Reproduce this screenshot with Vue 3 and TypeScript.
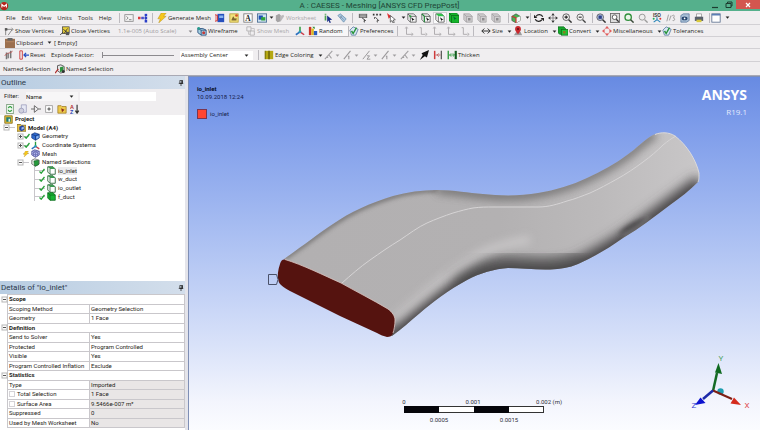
<script setup lang="ts">
import { ref } from 'vue'

interface Item {
  kind: 'sep' | 'strip' | 'btn' | 'menus' | 'scale' | 'label' | 'slider' | 'assembly'
  icons?: string[]
  icon?: string
  label?: string
  caret?: boolean
  off?: boolean
  pressed?: boolean
  active?: string
}
interface Bar { name: string; items: Item[] }
interface Node { label: string; icon: string; depth: number; expander?: 'plus' | 'minus'; mark?: 'tick' | 'bolt'; selected?: boolean }
interface Detail { name: string; value?: string; group?: boolean; ro?: boolean; check?: boolean }

const menus = ['File', 'Edit', 'View', 'Units', 'Tools', 'Help']
const sep: Item = { kind: 'sep' }

const bars: Bar[] = [
  {
    name: 'main',
    items: [
      { kind: 'menus' }, sep,
      { kind: 'strip', icons: ['cmd', 'flow'] }, sep,
      { kind: 'btn', icon: 'bolt', label: 'Generate Mesh' },
      { kind: 'strip', icons: ['section', 'comment', 'note', 'figure'], caret: true },
      { kind: 'btn', icon: 'sheet', label: 'Worksheet', off: true },
      { kind: 'strip', icons: ['info', 'tag'] }, sep,
      { kind: 'strip', icons: ['probe', 'coords'] },
      { kind: 'btn', icon: 'cursor', caret: true },
      { kind: 'strip', icons: ['cubev', 'cubee', 'cubef', 'cubeb', 'cubeg', 'cubeg', 'cubeg'], active: 'cubef' }, sep,
      { kind: 'btn', icon: 'cubex', caret: true }, sep,
      { kind: 'strip', icons: ['rotate', 'pan', 'zoomp', 'zoomm'] }, sep,
      { kind: 'strip', icons: ['zoomf', 'zoomb', 'zoomg', 'zoomo', 'iso', 'link', 'look', 'print'] }, sep,
      { kind: 'btn', icon: 'window', caret: true },
    ],
  },
  {
    name: 'display',
    items: [
      { kind: 'btn', icon: 'vertex', label: 'Show Vertices' },
      { kind: 'btn', icon: 'closev', label: 'Close Vertices' },
      { kind: 'scale' },
      { kind: 'btn', icon: 'wire', label: 'Wireframe' },
      { kind: 'btn', icon: 'meshoff', label: 'Show Mesh', off: true },
      { kind: 'btn', icon: 'axes' },
      { kind: 'btn', icon: 'random', label: 'Random', pressed: true },
      { kind: 'btn', icon: 'prefs', label: 'Preferences' }, sep,
      { kind: 'strip', icons: ['ell', 'ell2', 'ell', 'ell', 'ell2'] }, sep,
      { kind: 'btn', icon: 'size', label: 'Size', caret: true },
      { kind: 'btn', icon: 'place', label: 'Location', caret: true },
      { kind: 'btn', icon: 'convert', label: 'Convert', caret: true },
      { kind: 'btn', icon: 'misc', label: 'Miscellaneous', caret: true },
      { kind: 'btn', icon: 'prefs', label: 'Tolerances' },
    ],
  },
  {
    name: 'clip',
    items: [
      { kind: 'btn', icon: 'clipboard', label: 'Clipboard', caret: true },
      { kind: 'label', label: '[ Empty]' },
    ],
  },
  {
    name: 'explode',
    items: [
      { kind: 'btn', icon: 'explode' },
      { kind: 'btn', icon: 'reset', label: 'Reset' },
      { kind: 'slider' },
      { kind: 'assembly' }, sep,
      { kind: 'btn', icon: 'edge', label: 'Edge Coloring', caret: true },
      { kind: 'btn', icon: 'e0', caret: true, off: true },
      { kind: 'btn', icon: 'e1', caret: true, off: true },
      { kind: 'btn', icon: 'e2', caret: true, off: true },
      { kind: 'btn', icon: 'e1', caret: true, off: true },
      { kind: 'btn', icon: 'e0', caret: true, off: true },
      { kind: 'btn', icon: 'pin' },
      { kind: 'btn', icon: 'thinred' },
      { kind: 'btn', icon: 'thick', label: 'Thicken' },
    ],
  },
  {
    name: 'named',
    items: [
      { kind: 'label', label: 'Named Selection' },
      { kind: 'btn', icon: 'named', label: 'Named Selection' },
    ],
  },
]

const treeTools = ['sheetg', 'refresh', 'collapse', 'expand', 'folder', 'sort']

const nodes: Node[] = [
  { label: 'Project', icon: 'project', depth: 0 },
  { label: 'Model (A4)', icon: 'model', depth: 1, expander: 'minus' },
  { label: 'Geometry', icon: 'geom', depth: 2, expander: 'plus', mark: 'tick' },
  { label: 'Coordinate Systems', icon: 'axes', depth: 2, expander: 'plus', mark: 'tick' },
  { label: 'Mesh', icon: 'mesh', depth: 2, mark: 'bolt' },
  { label: 'Named Selections', icon: 'nsel', depth: 2, expander: 'minus' },
  { label: 'io_inlet', icon: 'facesel', depth: 3, mark: 'tick', selected: true },
  { label: 'w_duct', icon: 'facesel', depth: 3, mark: 'tick' },
  { label: 'io_outlet', icon: 'facesel', depth: 3, mark: 'tick' },
  { label: 'f_duct', icon: 'bodysel', depth: 3, mark: 'tick' },
]

const details: Detail[] = [
  { name: 'Scope', group: true },
  { name: 'Scoping Method', value: 'Geometry Selection' },
  { name: 'Geometry', value: '1 Face' },
  { name: 'Definition', group: true },
  { name: 'Send to Solver', value: 'Yes' },
  { name: 'Protected', value: 'Program Controlled' },
  { name: 'Visible', value: 'Yes' },
  { name: 'Program Controlled Inflation', value: 'Exclude' },
  { name: 'Statistics', group: true },
  { name: 'Type', value: 'Imported', ro: true },
  { name: 'Total Selection', value: '1 Face', ro: true, check: true },
  { name: 'Surface Area', value: '9.5466e-007 m²', ro: true, check: true },
  { name: 'Suppressed', value: '0', ro: true },
  { name: 'Used by Mesh Worksheet', value: 'No', ro: true },
]

const factor = ref(0)
const filterText = ref('')
</script>

<template>
  <div class="app">
    <svg class="sprite" aria-hidden="true">
      <symbol id="caret" viewBox="0 0 6 4"><path d="M0.5 0.5h5L3 3.6z" fill="currentColor" /></symbol>
      <symbol id="cmd" viewBox="0 0 12 12"><rect x="1" y="2" width="10" height="8" fill="#f4f4f4" stroke="#8a8a8a" /><path d="M3 4l2 2-2 2M6 8h3" fill="none" stroke="#555" stroke-width=".8" /></symbol>
      <symbol id="flow" viewBox="0 0 12 12"><path d="M3 6h5M9 2v8" stroke="#6574c8" fill="none" /><rect x="0" y="4.5" width="3" height="3" fill="#df3a3a" /><rect x="4" y="4.5" width="3" height="3" fill="#4d50c8" /><rect x="8" y="1" width="3" height="3" fill="#2b3fc8" /><rect x="8" y="4.7" width="3" height="3" fill="#2b3fc8" /><rect x="8" y="8.4" width="3" height="3" fill="#2b3fc8" /></symbol>
      <symbol id="bolt" viewBox="0 0 12 12"><path d="M5 0h6L8 4h3L2 12l2-5H1z" fill="#f6c71c" stroke="#a98318" stroke-width=".5" /></symbol>
      <symbol id="section" viewBox="0 0 12 12"><path d="M0 2h4v8H0z" fill="#e9a7a7" /><rect x="3" y="1" width="8" height="10" fill="#2750bd" /><path d="M5 3h5v3H5z" fill="#8ab4ef" /><path d="M0 2l3 1v6l-3 1" fill="none" stroke="#c33" /></symbol>
      <symbol id="comment" viewBox="0 0 12 12"><rect x="1" y="1" width="10" height="10" fill="#f2e27b" stroke="#b99f3a" /><path d="M3 8l2-4 2 3 2-1v3H3z" fill="#7c6530" /><circle cx="9" cy="3" r="1.6" fill="#d8532a" /></symbol>
      <symbol id="note" viewBox="0 0 12 12"><rect x="1" y="1" width="10" height="10" fill="#fff" stroke="#777" /><text x="6" y="9.5" font-size="9" font-weight="700" text-anchor="middle" font-family="Liberation Serif, serif" fill="#222">A</text></symbol>
      <symbol id="figure" viewBox="0 0 12 12"><rect x=".5" y="1" width="11" height="10" fill="#cfe3f2" stroke="#44688f" /><path d="M2 3h5v5H2z" fill="#1c4fb4" /><path d="M5 5h5v4H5z" fill="#2fa339" /></symbol>
      <symbol id="sheet" viewBox="0 0 12 12"><path d="M1 3l4-2 2 2v7l-4 1-2-2z" fill="#a5a3a5" /><path d="M6 4l4-2 1 2-4 6z" fill="#bcbabc" /></symbol>
      <symbol id="info" viewBox="0 0 12 12"><path d="M3 3v6M3 1v1" stroke="#4da252" stroke-width="2" /><path d="M5 3l6 5-3 .3 1.500 3-1.500.7-1.400-3L5 11z" fill="#1b2f87" /></symbol>
      <symbol id="tag" viewBox="0 0 12 12"><path d="M1 3l3-2 7 6-3 4z" fill="#a9c6df" stroke="#5f86a6" stroke-width=".8" /><path d="M4 4l4 4M6 3L4 6" stroke="#6f7f95" stroke-width=".7" /></symbol>
      <symbol id="probe" viewBox="0 0 12 12"><rect x="1" y="1" width="10" height="5" fill="#6d6d6d" /><path d="M2.500 2.500h7M2.500 4.500h7" stroke="#ddd" stroke-width=".8" /><path d="M5 6l4 3-1.800.3.5 2" fill="none" stroke="#222" /></symbol>
      <symbol id="coords" viewBox="0 0 12 12"><path d="M1 2h2M5 2h2M9 2h2" stroke="#333" stroke-width="2" /><path d="M4 5l4 4-2 .3.5 2M3 5v2" fill="none" stroke="#333" /></symbol>
      <symbol id="cursor" viewBox="0 0 12 12"><path d="M0 0l5 4-3 3z" fill="#d33" /><path d="M4 3l6 5-2.500.4 1.200 3-1.500.6-1.200-3L4 11z" fill="#fff" stroke="#333" stroke-width=".8" /></symbol>
      <symbol id="cubev" viewBox="0 0 12 12"><path d="M1 1h7l3 3v7H4L1 8z" fill="#f2f2f2" stroke="#4b4b4b" stroke-width=".9" /><path d="M1 1l3 3h7M4 4v7" stroke="#4b4b4b" stroke-width=".9" fill="none" /><path d="M5 5l4 3-2 .4v2z" fill="#111" /><circle cx="4" cy="4" r="1.300" fill="#27a13b" /></symbol>
      <symbol id="cubee" viewBox="0 0 12 12"><path d="M1 1h7l3 3v7H4L1 8z" fill="#f2f2f2" stroke="#4b4b4b" stroke-width=".9" /><path d="M4 4h7" stroke="#4b4b4b" /><path d="M1 1l3 3v7" stroke="#258539" stroke-width="1.500" fill="none" /><path d="M6 5l4 3-2 .4v2z" fill="#111" /></symbol>
      <symbol id="cubef" viewBox="0 0 12 12"><path d="M1 1h7l3 3v7H4L1 8z" fill="#fafafa" stroke="#4b4b4b" stroke-width=".9" /><path d="M1 1h7l3 3H4z" fill="#2fc24a" /><path d="M4 4v7" stroke="#555" /><path d="M6 5l4 3-2 .4v2z" fill="#111" /></symbol>
      <symbol id="cubeb" viewBox="0 0 12 12"><path d="M0 0h9l3 3v9H3L0 9z" fill="#14b42b" stroke="#0d6e1b" stroke-width=".8" /><path d="M0 0l3 3h9M3 3v9" stroke="#0d6e1b" fill="none" /><path d="M5 4l4 3-2 .4v2z" fill="#063" /></symbol>
      <symbol id="cubeg" viewBox="0 0 12 12"><path d="M1 1h7l3 3v7H4L1 8z" fill="#d0ced0" stroke="#a3a1a3" stroke-width=".9" /><path d="M1 1l3 3h7M4 4v7" stroke="#a3a1a3" fill="none" /><path d="M6 6h3v3H6z" fill="#8f8d8f" /></symbol>
      <symbol id="cubex" viewBox="0 0 12 12"><path d="M1 4l5-3 5 3v5l-5 3-5-3z" fill="#49b353" stroke="#444" stroke-width=".7" /><path d="M6 6l5-2v5l-5 3z" fill="#f4f4f4" /><path d="M1 4l5 2v6" fill="none" stroke="#c33" stroke-width="1.400" /></symbol>
      <symbol id="rotate" viewBox="0 0 12 12"><path d="M10.500 4.500A4.500 4 0 0 0 2.500 4M1.500 7.500A4.500 4 0 0 0 9.500 8" fill="none" stroke="#222" stroke-width="1.500" /><path d="M0 2v4h4zM12 10V6H8z" fill="#222" /></symbol>
      <symbol id="pan" viewBox="0 0 12 12"><path d="M6 0l2 3H4zM6 12l2-3H4zM0 6l3-2v4zM12 6L9 4v4z" fill="#333" /><circle cx="6" cy="6" r="1.400" fill="none" stroke="#555" stroke-width=".8" /></symbol>
      <symbol id="zoomp" viewBox="0 0 12 12"><circle cx="5" cy="5" r="4" fill="#f5f5f5" stroke="#444" /><path d="M8 8l3.500 3.500" stroke="#333" stroke-width="1.800" /><path d="M3 5h4M5 3v4" stroke="#222" stroke-width="1.400" /></symbol>
      <symbol id="zoomm" viewBox="0 0 12 12"><circle cx="5" cy="5" r="3.800" fill="#f5f5f5" stroke="#555" /><path d="M8 8l3.500 3.500" stroke="#444" stroke-width="1.600" /><path d="M3.200 5h3.600" stroke="#222" stroke-width="1.300" /></symbol>
      <symbol id="zoomf" viewBox="0 0 12 12"><circle cx="5" cy="5" r="4" fill="#b8c6e6" stroke="#555" /><path d="M3 3h4v4H3z" fill="#2b3f86" /><path d="M8 8l3.500 3.500" stroke="#333" stroke-width="1.800" /></symbol>
      <symbol id="zoomb" viewBox="0 0 12 12"><rect x=".5" y=".5" width="11" height="11" fill="#ddd" stroke="#666" /><circle cx="5.500" cy="5" r="2.800" fill="#fff" stroke="#444" /><path d="M7.500 7.500l3 3" stroke="#333" stroke-width="1.500" /></symbol>
      <symbol id="zoomg" viewBox="0 0 12 12"><circle cx="5" cy="5" r="3.800" fill="#e9f5e9" stroke="#2f8f3a" stroke-width="1.600" /><path d="M8 8l3.500 3.500" stroke="#3a4a3a" stroke-width="1.800" /></symbol>
      <symbol id="zoomo" viewBox="0 0 12 12"><circle cx="5" cy="5" r="3.600" fill="#eee" stroke="#9b9b9b" stroke-width="1.200" /><path d="M8 8l3.500 3.500" stroke="#9b9b9b" stroke-width="1.600" /></symbol>
      <symbol id="iso" viewBox="0 0 12 12"><text x="6" y="4.500" font-size="5.500" font-weight="700" text-anchor="middle" font-family="Liberation Sans, sans-serif" fill="#333">ISO</text><path d="M6 5v3l-4 3M6 8l4 3" stroke="#2a86b8" fill="none" stroke-width="1.300" /><circle cx="2" cy="7" r="1.200" fill="#2a5" /><circle cx="10" cy="7" r="1.200" fill="#d33" /></symbol>
      <symbol id="link" viewBox="0 0 12 12"><path d="M3 2L1 10M6 3L4 9M7 4c2-3 4-1 2 2M8 9c3 1 3-3 1-3" stroke="#999" fill="none" stroke-width="1.100" /></symbol>
      <symbol id="look" viewBox="0 0 12 12"><path d="M1 3l3-2h7v8l-3 2H1z" fill="#a9bfd6" stroke="#4b6b92" stroke-width=".8" /><ellipse cx="5.500" cy="6.500" rx="3.500" ry="2.200" fill="#27466e" /><circle cx="5.500" cy="6.500" r="1" fill="#fff" /></symbol>
      <symbol id="print" viewBox="0 0 12 12"><path d="M3 1h6v4H3z" fill="#fff" stroke="#777" stroke-width=".7" /><rect x="1" y="4.500" width="10" height="5" fill="#59616b" /><rect x="3" y="8" width="6" height="3" fill="#d9c93c" /></symbol>
      <symbol id="window" viewBox="0 0 12 12"><rect x="1" y="1" width="10" height="10" fill="#fff" stroke="#5c6f8f" /><path d="M1 2h10" stroke="#5c7fb5" stroke-width="2" /></symbol>
      <symbol id="vertex" viewBox="0 0 12 12"><path d="M2 11V4h8L5 11" fill="none" stroke="#777" /><rect x="1" y="2.500" width="3" height="3" fill="#555" /><path d="M9 2l2 2-2 2" fill="none" stroke="#777" stroke-width=".8" /></symbol>
      <symbol id="closev" viewBox="0 0 12 12"><rect x="3" y="1" width="8" height="8" fill="#e8cf38" stroke="#333" stroke-width=".8" /><path d="M0 11l4-4M4 4l5 4M9 3L5 9" stroke="#333" fill="none" /><rect x="7" y="7" width="4" height="4" fill="#555" /></symbol>
      <symbol id="wire" viewBox="0 0 12 12"><path d="M1 3h6l4 2v6H5L1 8z" fill="#a7d2e3" stroke="#274c7c" /><path d="M1 3l4 2h6M5 5v6" fill="none" stroke="#274c7c" /><circle cx="2" cy="3" r="1.700" fill="#2a9c8f" /><circle cx="8" cy="8" r="1.800" fill="#c33a3a" /></symbol>
      <symbol id="meshoff" viewBox="0 0 12 12"><path d="M1 1h5v5H1zM5 6h5v5H5z" fill="none" stroke="#b0aeb0" /><path d="M6 3h4v3M3 6v4h2" fill="none" stroke="#c0bec0" /></symbol>
      <symbol id="axes" viewBox="0 0 12 12"><path d="M6 7V1" stroke="#2a9a3a" stroke-width="1.800" /><path d="M6 7l5 3.500" stroke="#cc3c4c" stroke-width="1.800" /><path d="M6 7l-5 3.500" stroke="#2b6fc0" stroke-width="2" /><circle cx="6" cy="7" r="1.700" fill="#2b9cb5" /></symbol>
      <symbol id="random" viewBox="0 0 12 12"><rect x="1" y="1" width="3" height="10" fill="#c8322b" /><rect x="4" y="3" width="3" height="8" fill="#e0b91f" /><rect x="7" y="6" width="4" height="5" fill="#2a5bc0" /><path d="M5 1h3v3z" fill="#2c8a35" /></symbol>
      <symbol id="prefs" viewBox="0 0 12 12"><path d="M1 5l4-4 6 3-3 7-5 0z" fill="#d8e7f3" stroke="#5f7fa4" /><path d="M3 6l2 3 4-7" fill="none" stroke="#27943a" stroke-width="1.700" /></symbol>
      <symbol id="ell" viewBox="0 0 12 12"><path d="M3 2v8h7" fill="none" stroke="#a3a1a3" /><path d="M1.500 3L3 1l1.500 2M9 8.500l2 1.500-2 1.500" fill="none" stroke="#a3a1a3" /></symbol>
      <symbol id="ell2" viewBox="0 0 12 12"><path d="M2 2h2v8h5" fill="none" stroke="#a3a1a3" /><path d="M9 8.500l2 1.500-2 1.500" fill="none" stroke="#a3a1a3" /></symbol>
      <symbol id="size" viewBox="0 0 12 12"><path d="M1 6h10M4 3L1 6l3 3M8 3l3 3-3 3" fill="none" stroke="#333" stroke-width="1.200" /></symbol>
      <symbol id="place" viewBox="0 0 12 12"><path d="M1 11l3-4h5l2 4z" fill="#9b9b9b" /><path d="M6 10C3 6 2.500 5 2.500 3.500a3.500 3.500 0 0 1 7 0C9.500 5 9 6 6 10z" fill="#c9282d" /><circle cx="6" cy="3.500" r="1.200" fill="#5a0f12" /></symbol>
      <symbol id="convert" viewBox="0 0 12 12"><path d="M0 1h7l2 2v7H2L0 8z" fill="#17a82c" stroke="#0c6419" stroke-width=".8" /><rect x="4" y="4" width="8" height="7" fill="#1fc236" stroke="#0c6419" stroke-width=".8" /><rect x="6" y="6" width="3" height="3" fill="#8a7a20" /></symbol>
      <symbol id="misc" viewBox="0 0 12 12"><path d="M6 0l2.500 3h-5zM6 12l2.500-3h-5zM0 6l3-2.500v5zM12 6L9 3.500v5z" fill="#e05353" /><circle cx="6" cy="6" r="3.500" fill="none" stroke="#e78b8b" stroke-width=".8" /></symbol>
      <symbol id="clipboard" viewBox="0 0 12 12"><rect x="0" y="1" width="12" height="11" fill="#9b6f4e" /><rect x="3" y="0" width="6" height="3" fill="#666" /><path d="M1 4h10v1H1z" fill="#b98b66" /></symbol>
      <symbol id="explode" viewBox="0 0 12 12"><path d="M3 3v8M8 1v9" stroke="#777" stroke-width="1.800" /><path d="M1 7c2-5 8-2 9-6" stroke="#c0504d" fill="none" /><path d="M5 4v6" stroke="#333" /></symbol>
      <symbol id="reset" viewBox="0 0 12 12"><path d="M1 1h3v10H1z" fill="none" stroke="#d04a4a" stroke-width="1.200" /><path d="M12 6H6M8.500 3.500L6 6l2.500 2.500" fill="none" stroke="#274ec0" stroke-width="1.500" /></symbol>
      <symbol id="edge" viewBox="0 0 12 12"><rect x="1" y="1" width="10" height="10" fill="#b5a813" /><path d="M6 1v10" stroke="#5c5608" stroke-width="1.500" /><path d="M1.500 1v10" stroke="#6e670c" /></symbol>
      <symbol id="e0" viewBox="0 0 12 12"><path d="M1 11L10 1M6 6l3 4M3 9h2" stroke="#a3a1a3" stroke-width="1.300" fill="none" /></symbol>
      <symbol id="e1" viewBox="0 0 12 12"><path d="M1 11L9 1M7 7v4M6 8l1-1" stroke="#9b999b" stroke-width="1.300" fill="none" /></symbol>
      <symbol id="e2" viewBox="0 0 12 12"><path d="M1 11L9 1M6 7h3l-3 4h4" stroke="#9b999b" stroke-width="1.200" fill="none" /></symbol>
      <symbol id="pin" viewBox="0 0 12 12"><path d="M12 0L9.500 9 7 7.500 1 12l3.500-6L3 4z" fill="#111" /></symbol>
      <symbol id="thinred" viewBox="0 0 12 12"><path d="M2 1v10" stroke="#cf3b3b" stroke-width="1.800" /><path d="M10 1v10" stroke="#555" stroke-width="1.500" /><path d="M3 6h6M7 4L5 6l2 2" stroke="#b55" fill="none" /></symbol>
      <symbol id="thick" viewBox="0 0 12 12"><path d="M1.500 1v10" stroke="#2b9a3b" stroke-width="1.600" /><path d="M10.500 1v10" stroke="#145c20" stroke-width="2.600" /><path d="M3 6h6M5 4L3 6l2 2M7 4l2 2-2 2" stroke="#2b9a3b" fill="none" /></symbol>
      <symbol id="named" viewBox="0 0 12 12"><path d="M3 2l4-1 4 2v6l-4 2-4-3z" fill="#e6e6e6" stroke="#444" /><path d="M6 4l4-1v5l-4 2z" fill="#2e9440" /><path d="M0 11l4-5" stroke="#b03030" stroke-width="1.500" /><circle cx="10" cy="9" r="1.800" fill="#333" /></symbol>
      <symbol id="sheetg" viewBox="0 0 12 12"><rect x="2" y=".5" width="8" height="11" fill="#f4fbf4" stroke="#7a9a7a" /><path d="M4 5c1-3 4-2 4 0M8 7c-1 3-4 2-4 0" fill="none" stroke="#2f9c3e" stroke-width="1.500" /></symbol>
      <symbol id="refresh" viewBox="0 0 12 12"><path d="M4 1h6v9H4z" fill="#e6e8f4" stroke="#8e90b2" stroke-width=".8" /><circle cx="4" cy="8" r="3" fill="#cfcfdd" stroke="#9a9ab8" /></symbol>
      <symbol id="collapse" viewBox="0 0 12 12"><path d="M0 6h4M4 2v8l5-4zM9 6h3" fill="none" stroke="#555" /></symbol>
      <symbol id="expand" viewBox="0 0 12 12"><rect x="2" y="2" width="8" height="8" fill="#fff" stroke="#999" /><path d="M4 6h4M6 4v4" stroke="#333" /></symbol>
      <symbol id="folder" viewBox="0 0 12 12"><path d="M1 2h4l1 1h5v8H1z" fill="#edc94b" stroke="#94701a" stroke-width=".8" /><path d="M5 5l4 2-3 3z" fill="#8d2c20" /></symbol>
      <symbol id="sort" viewBox="0 0 12 12"><path d="M8.500 1v9M6.500 8l2 3 2-3" stroke="#333" fill="none" stroke-width="1.400" /><text x="0" y="5.500" font-size="6.500" font-weight="700" font-family="Liberation Sans, sans-serif" fill="#b32d2d">A</text><text x="0" y="11.500" font-size="6.500" font-weight="700" font-family="Liberation Sans, sans-serif" fill="#2c3fb0">Z</text></symbol>
      <symbol id="project" viewBox="0 0 12 12"><path d="M1 1h10v10H1z" fill="#e0bb3c" stroke="#7e6514" /><rect x="3" y="3" width="6" height="6" fill="#1f7d72" /><path d="M6 5h2v4H6z" fill="#d7f1ea" /></symbol>
      <symbol id="model" viewBox="0 0 12 12"><path d="M0 2h5l1 1h6v8H0z" fill="#e6c14a" stroke="#7e6514" /><path d="M3 5l4-2 3 2v4l-4 2-3-2z" fill="#2747a5" /><path d="M6 6l3-1v3L6 9z" fill="#a2bce9" /></symbol>
      <symbol id="geom" viewBox="0 0 12 12"><path d="M1 3l4-2 6 2v5l-5 3-5-3z" fill="#2f6bd0" stroke="#17357c" stroke-width=".9" /><path d="M1 3l5 2 5-2M6 5v6" stroke="#17357c" fill="none" /><path d="M7 6l3-1v3L7 9z" fill="#8cb6ee" /></symbol>
      <symbol id="mesh" viewBox="0 0 12 12"><path d="M1 3l4-2 6 2v5l-5 3-5-3z" fill="#b9bdf0" stroke="#3c3f8a" stroke-width=".9" /><path d="M1 3l5 2 5-2M6 5v6M1 6l5 2 5-2M3.500 2l5 2v6M8.500 2l-5 2v6" stroke="#4b4e9d" fill="none" stroke-width=".7" /></symbol>
      <symbol id="nsel" viewBox="0 0 12 12"><path d="M1 3l4-2 6 2v5l-5 3-5-3z" fill="#dfe6df" stroke="#555" stroke-width=".9" /><path d="M4 4l6-1v6l-5 2z" fill="#259b3c" stroke="#0d5b1d" stroke-width=".8" /></symbol>
      <symbol id="facesel" viewBox="0 0 12 12"><path d="M1 1h7l3 3v7H4L1 8z" fill="#fff" stroke="#1f5b2d" stroke-width="1.100" /><path d="M1 1h7l3 3H4z" fill="#3f9a52" /><path d="M4 4v7" stroke="#1f5b2d" /></symbol>
      <symbol id="bodysel" viewBox="0 0 12 12"><path d="M1 1h7l3 3v7H4L1 8z" fill="#17b534" stroke="#0b6b1c" stroke-width="1.100" /><path d="M1 1l3 3h7M4 4v7" stroke="#0b6b1c" fill="none" /></symbol>
      <symbol id="tick" viewBox="0 0 6 6"><path d="M.5 3.500l1.700 1.700L5.500 1" fill="none" stroke="#25a137" stroke-width="1.300" /></symbol>
      <symbol id="tack" viewBox="0 0 8 8"><path d="M2.500.5h3.500v4h-3.500zM1 4.500h6M4 4.500V8" fill="none" stroke="#222" /><path d="M4.500.5h1.500v4h-1.500z" fill="#222" /></symbol>
    </svg>

    <header class="title">
      <svg class="logo" viewBox="0 0 12 12" aria-hidden="true"><circle cx="5.500" cy="6" r="5.500" fill="#b5251d" /><path d="M2.500 8V4l3 2.500L8.500 4v4" fill="none" stroke="#fff" stroke-width="1.500" /></svg>
      <h1>A : CAESES - Meshing [ANSYS CFD PrepPost]</h1>
      <div class="winctl">
        <button aria-label="Minimize"><svg viewBox="0 0 8 8"><path d="M1 6.500h6" stroke="#1d3d30" stroke-width="1.200" /></svg></button>
        <button aria-label="Restore"><svg viewBox="0 0 8 8"><path d="M2.500 2V1H7v4H6M1 2.500h5v4H1z" fill="none" stroke="#1d3d30" /></svg></button>
        <button class="close" aria-label="Close"><svg viewBox="0 0 8 8"><path d="M2 2l4 4M6 2L2 6" stroke="#fff" stroke-width="1.200" /></svg></button>
      </div>
    </header>

    <div v-for="bar in bars" :key="bar.name" class="bar" :class="bar.name">
      <template v-for="(it, i) in bar.items" :key="i">
        <span v-if="it.kind === 'sep'" class="sep"></span>
        <nav v-else-if="it.kind === 'menus'" class="menus">
          <button v-for="m in menus" :key="m">{{ m }}</button>
        </nav>
        <div v-else-if="it.kind === 'strip'" class="strip">
          <button v-for="(ic, k) in it.icons" :key="k" class="slot" :class="{ active: ic === it.active }" :aria-label="ic">
            <svg class="ic"><use :href="'#' + ic" /></svg>
          </button>
          <svg v-if="it.caret" class="caret"><use href="#caret" /></svg>
        </div>
        <span v-else-if="it.kind === 'label'" class="text">{{ it.label }}</span>
        <div v-else-if="it.kind === 'scale'" class="pick faded">
          <select aria-label="Vertex scale" disabled><option>1.1e-005 (Auto Scale)</option></select>
          <svg class="caret"><use href="#caret" /></svg>
        </div>
        <div v-else-if="it.kind === 'slider'" class="slider">
          <label for="factor">Explode Factor:</label>
          <input id="factor" v-model="factor" type="range" min="0" max="100">
        </div>
        <div v-else-if="it.kind === 'assembly'" class="pick white">
          <select aria-label="Explode origin"><option>Assembly Center</option></select>
          <svg class="caret"><use href="#caret" /></svg>
        </div>
        <button v-else class="btn" :class="{ off: it.off, pressed: it.pressed }" :disabled="it.off" :aria-label="it.label ?? it.icon">
          <svg class="ic"><use :href="'#' + it.icon" /></svg>
          <span v-if="it.label">{{ it.label }}</span>
          <svg v-if="it.caret" class="caret"><use href="#caret" /></svg>
        </button>
      </template>
    </div>

    <main class="body">
      <aside class="side">
        <section class="outline">
          <h2>Outline<svg class="tack"><use href="#tack" /></svg></h2>
          <div class="filter">
            <label for="filter">Filter:</label>
            <div class="pick">
              <select id="filter"><option>Name</option></select>
              <svg class="caret"><use href="#caret" /></svg>
            </div>
            <input v-model="filterText" type="text" aria-label="Filter text">
          </div>
          <div class="treebar">
            <button v-for="t in treeTools" :key="t" class="slot" :aria-label="t"><svg class="ic"><use :href="'#' + t" /></svg></button>
          </div>
          <ul class="tree">
            <li v-for="n in nodes" :key="n.label" :class="'d' + n.depth">
              <span v-if="n.depth" class="lead">
                <svg v-if="n.expander" class="exp" viewBox="0 0 7 7"><rect x="1" y="1" width="5" height="5" fill="#fff" stroke="#b5b5b5" /><path :d="n.expander === 'plus' ? 'M2 3.500h3M3.500 2v3' : 'M2 3.500h3'" stroke="#555" /></svg>
                <svg v-if="n.mark" class="mark"><use :href="'#' + n.mark" /></svg>
              </span>
              <svg class="ic"><use :href="'#' + n.icon" /></svg>
              <span class="name" :class="{ selected: n.selected }">{{ n.label }}</span>
            </li>
          </ul>
        </section>
        <section class="details">
          <h2>Details of "io_inlet"<svg class="tack"><use href="#tack" /></svg></h2>
          <table>
            <colgroup><col class="c0"><col class="c1"><col></colgroup>
            <tbody>
              <tr v-for="(d, i) in details" :key="d.name">
                <td class="gut"><svg v-if="d.group" class="exp" viewBox="0 0 7 7"><rect x="1" y="1" width="5" height="5" fill="#fff" stroke="#b5b5b5" /><path d="M2 3.500h3" stroke="#555" /></svg></td>
                <th v-if="d.group" colspan="2" scope="rowgroup">{{ d.name }}</th>
                <template v-else>
                  <td>
                    <label v-if="d.check" :for="'chk' + i" class="chk"><input :id="'chk' + i" type="checkbox">{{ d.name }}</label>
                    <template v-else>{{ d.name }}</template>
                  </td>
                  <td :class="{ ro: d.ro }">{{ d.value }}</td>
                </template>
              </tr>
            </tbody>
          </table>
        </section>
      </aside>

      <section class="view">
        <svg class="scene" viewBox="188 76 572 354" preserveAspectRatio="xMidYMid slice" role="img" aria-label="Duct model">
          <defs>
            <linearGradient id="skin" gradientUnits="userSpaceOnUse" x1="300" y1="0" x2="700" y2="0">
              <stop offset="0" stop-color="#b2b0b1" /><stop offset=".5" stop-color="#b3b1b2" /><stop offset=".75" stop-color="#bcbabb" /><stop offset="1" stop-color="#c9c7c8" />
            </linearGradient>
            <filter id="b3" x="-20%" y="-20%" width="140%" height="140%"><feGaussianBlur stdDeviation="4" /></filter>
            <filter id="b6" x="-20%" y="-30%" width="140%" height="160%"><feGaussianBlur stdDeviation="6" /></filter>
            <filter id="b2" x="-30%" y="-60%" width="160%" height="220%"><feGaussianBlur stdDeviation="2" /></filter>
            <clipPath id="body"><path d="M284 259C300 248 318 234 333 224C350 212 370 203 393 196C407 192 422 190 437 190C455 190 468 193 483 194C500 196 522 196 538 193C556 190 572 185 587 178C602 171 615 164 627 155C636 149 645 139 653 135C660 132 668 132 675 136C687 145 696 160 699 173C699 178 699 180 698 182C690 190 680 198 670 205C655 216 640 228 623 238C609 248 594 257 578 264C569 268 560 269 550 269.500C536 270 522 268 508 268C494 269 480 273 467 280C448 290 432 303 420 313C410 321 402 329 392 336Z" /></clipPath>
          </defs>
          <g clip-path="url(#body)">
            <path d="M260 110h460v240H260z" fill="url(#skin)" />
            <path d="M386 345C425 315 445 297 467 283C484 274 496 270 512 271C542 273 562 273 580 266C624 245 648 223 702 184" fill="none" stroke="#474546" stroke-width="19" filter="url(#b6)" />
            <path d="M460 290C482 274 494 268 512 269C542 271 562 272 585 262" fill="none" stroke="#4a4849" stroke-width="30" opacity=".5" filter="url(#b6)" />
            <path d="M393 320C420 298 452 268 484 252C500 245 512 242 530 240" fill="none" stroke="#dedcdd" stroke-width="8" opacity=".5" filter="url(#b3)" />
            <path d="M284 258C300 248 318 234 333 224C350 212 370 203 393 196C407 192 422 190 437 190" fill="none" stroke="#626061" stroke-width="5" opacity=".7" filter="url(#b2)" />
            <path d="M437 189C455 190 468 193 483 194C500 196 522 196 538 193C556 190 572 185 587 178C602 171 615 164 627 155C636 149 645 139 655 134" fill="none" stroke="#5a5859" stroke-width="9" opacity=".7" filter="url(#b3)" />
            <path d="M618 235C624 226 635 220 648 218C640 225 628 233 618 235Z" fill="#4e4c4d" filter="url(#b2)" />
            <path d="M624 237C635 231 643 224 650 217" fill="none" stroke="#aaa8a9" stroke-width="2" opacity=".6" filter="url(#b2)" />
          </g>
          <path d="M342 283C351 275 360 267 370 260C380 253 390 246 400 240C409 234 418 227 427 223C436 219 444 216 453 213C460 211 467 209 473 208C480 207 487 207 493 207H538C549 207 558 204 567 201C575 199 582 196 590 193C599 189 608 184 617 179C626 174 635 168 643 162C650 157 657 151 663 145C668 141 672 138 676 136" fill="none" stroke="#d6d4d5" />
          <path d="M655 134.500C661 132 669 132 675 136C687 145 696 160 699 173C699 178 699 180 698 182" fill="none" stroke="#dcdadb" />
          <path d="M285 259.500C303 265 323 275 341 283C357 292 373 300 388 309C392 312 395 316 395 320C395 325 394 330 393 333C392 336 390 337 387 337C384 336 380 335 377 333L340 316L290 291C284 288 279 284 278.500 281C277 276 278 270 280 264C281 260 283 259 285 259.500Z" fill="#55130f" />
          <path d="M285 259.500C303 265 323 275 341 283C357 292 373 300 388 309C392 312 395 316 395 320C395 325 394 330 393 333" fill="none" stroke="#dcc5c2" stroke-width=".8" />
          <path d="M268.500 274.500h8l1.500 5-1.500 5h-8z" fill="none" stroke="#4b526a" />
        </svg>

        <div class="top">
          <div class="legend">
            <strong>io_inlet</strong>
            <span>10.09.2018 12:24</span>
            <div class="key"><i></i>io_inlet</div>
          </div>
          <div class="brand"><b>ANSYS</b><span>R19.1</span></div>
        </div>
        <div class="bottom">
          <svg class="ruler" viewBox="0 0 180 30" role="img" aria-label="Scale">
            <rect x="20.500" y="9.500" width="139" height="6" fill="#fff" stroke="#333" />
            <path d="M20 9h35v7H20zM90 9h35v7H90z" fill="#05050a" />
            <g class="ticks"><text x="20" y="7">0</text><text x="89" y="7">0.001</text><text x="165" y="7">0.002 (m)</text><text x="55" y="25">0.0005</text><text x="125" y="25">0.0015</text></g>
          </svg>
          <svg class="triad" viewBox="0 0 66 70" role="img" aria-label="Axis triad">
            <path d="M29 41L33 23" stroke="#156b25" stroke-width="2.500" /><path d="M34.500 13l3.500 11-7-1.500z" fill="#0f6a20" />
            <circle cx="36.500" cy="41.500" r="3.200" fill="#1d9db0" />
            <path d="M29 40.500L48 49" stroke="#7d1f14" stroke-width="2" /><path d="M57 55l-10.500-1.500 3.500-6z" fill="#d42a1c" />
            <path d="M29 40.500L19 49" stroke="#1c2aa8" stroke-width="2.500" /><path d="M11 55l5.500-7.500 5 5.500z" fill="#0d12cf" />
            <text x="37" y="11" fill="#55a566">Y</text><text x="63" y="58" fill="#e0484b">X</text><text x="10" y="58" fill="#3340cf">Z</text>
          </svg>
        </div>
      </section>
    </main>
  </div>
</template>

<style>
body { margin: 0; }
</style>

<style scoped>
.app {
  min-height: 100vh;
  display: flex;
  flex-direction: column;
  font: 6px/8px "Open Sans", "Noto Sans", sans-serif;
  color: #1f1e20;
  background: #f0eef0;
  overflow: hidden;
}
.sprite { display: none; }
button, select, input { font: inherit; color: inherit; margin: 0; padding: 0; border: 0; background: none; border-radius: 0; }
button { display: flex; align-items: center; white-space: nowrap; }
svg { flex: none; display: block; }
.ic { width: 10px; height: 10px; }
.caret { width: 5px; height: 3px; color: #222; }

.title { display: flex; align-items: center; height: 11px; background: #55b08c; position: relative; }
.logo { width: 9px; height: 10px; }
h1 { flex: 1; margin: 0; font: 400 8px/11px Roboto, "Open Sans", sans-serif; text-align: center; color: #1f4636; padding-left: 42px; }
.winctl { display: flex; height: 9px; align-self: flex-start; }
.winctl button { width: 14px; height: 9px; justify-content: center; }
.winctl svg { width: 8px; height: 8px; }
.winctl .close { width: 24px; background: #d3564f; }

.bar { display: grid; align-items: center; height: 12px; border-bottom: 1px solid #d2d0d4; box-sizing: border-box; }
.main { height: 14px; grid-template-columns: 119px 3px 30px 5px 56px 62px 46px 31px 4px 31px 18px 103px 3px 19px 2px 60px 2px 115px 2px 1fr; }
.display { padding-left: 4px; grid-template-columns: 56px 58px 79px 49px 49px 13px 41px 48px 5px 71px 8px 32px 45px 44px 60px 1fr; }
.clip { padding-left: 5px; grid-template-columns: 49px 1fr; }
.explode { height: 13px; padding-left: 4px; grid-template-columns: 15px 32px 129px 78px 6px 60px 19px 19px 19px 19px 19px 14px 14px 1fr; }
.named { height: 14px; padding-left: 3px; grid-template-columns: 52px 1fr; border-color: #a9a9b4; }
.sep { width: 1px; height: 10px; background: #bcbabf; }
.menus { display: flex; gap: 6px; padding-left: 6px; }
.strip { display: flex; align-items: center; }
.slot { width: 14px; height: 12px; justify-content: center; }
.slot.active { background: #fbfbfb; outline: 1px solid #d3d1d5; outline-offset: -1px; }
.btn { gap: 1px; }
.btn .caret { margin-left: 3px; }
.off { color: #a9a7aa; }
.off .caret { color: #9f9da0; margin-left: 0; }
.pressed { height: 11px; background: #f8f7f8; box-shadow: inset -1px -1px #b9b7bb; }
.text { white-space: nowrap; }
.pick { display: flex; align-items: center; padding-right: 4px; }
.pick select { flex: 1; min-width: 0; appearance: none; height: 9px; line-height: 9px; }
.faded { color: #9d9b9f; }
.faded select { opacity: 1; }
.faded .caret { color: #88868a; }
.white { background: #fff; width: 68px; margin-right: 6px; padding-left: 1px; }
.slider { display: flex; align-items: center; padding-right: 6px; gap: 8px; white-space: nowrap; }
.slider input { flex: 1; min-width: 0; height: 8px; appearance: none; background: linear-gradient(#8c8a8e, #8c8a8e) center / 100% 1px no-repeat; }
.slider input::-webkit-slider-thumb { appearance: none; width: 1px; height: 6px; background: #8c8a8e; }

.body { flex: 1; display: grid; grid-template-columns: 188px 1fr; font-family: Roboto, "Open Sans", sans-serif; }
.side { display: flex; flex-direction: column; border-right: 3px solid #e4e4ea; background: #fff; }
.outline { flex: 1; display: flex; flex-direction: column; }
h2 { display: flex; align-items: center; justify-content: space-between; margin: 0; padding: 0 1px; height: 13px; font-size: 8px; line-height: 13px; font-weight: 400; color: #2c3a4c; background: linear-gradient(90deg, #b8cde2, #d3deeb); }
.tack { width: 6px; height: 6px; }
.filter { display: grid; grid-template-columns: 20px 52px 76px; column-gap: 2px; align-items: center; height: 14px; padding-left: 4px; background: #f0eef0; }
.filter .pick { background: #f7f6f7; }
.filter input { height: 9px; background: #fff; }
.treebar { display: flex; align-items: center; height: 12px; padding-left: 3px; background: #f0eef0; }
.treebar .slot { width: 13px; }
.tree { list-style: none; margin: 0; padding: 0; height: 86px; display: grid; grid-template-rows: repeat(10, 1fr); }
.tree li { display: flex; align-items: center; gap: 2px; min-height: 0; }
.tree .ic { width: 9px; height: 9px; }
.lead { display: flex; align-items: center; justify-content: space-between; align-self: stretch; width: 12px; background: linear-gradient(90deg, transparent 50%, #c8c6ca 50%) center / 100% 1px no-repeat; }
.d0 { padding-left: 4px; font-weight: 700; }
.d1 { padding-left: 3px; font-weight: 700; }
.d2 { padding-left: 17px; }
.d3 { padding-left: 34px; }
.d3 .lead { width: 11px; border-left: 1px solid #c8c6ca; box-sizing: border-box; background: linear-gradient(#c8c6ca, #c8c6ca) center / 100% 1px no-repeat; }
.exp { width: 7px; height: 7px; }
.mark { width: 6px; height: 6px; margin-left: auto; }
.selected { background: #ececee; }

.details { padding-bottom: 2px; }
table { width: 100%; height: 134px; table-layout: fixed; border-collapse: collapse; line-height: 8px; }
.c0 { width: 7px; }
.c1 { width: 82px; }
td, th { padding: 0 0 0 1px; border: 1px solid #c9c7cb; white-space: nowrap; text-align: left; }
tr .gut { padding: 0; border-color: transparent #c9c7cb transparent transparent; }
.ro { background: #e9e6e6; }
.chk { display: flex; align-items: center; gap: 2px; }
.chk input { appearance: none; width: 6px; height: 6px; border: 1px solid #d5d3d7; background: #fff; }

.view { position: relative; display: flex; flex-direction: column; justify-content: space-between; overflow: hidden; background: linear-gradient(#678ae2, #7d9cea 14%, #aabff2 45%, #d9e2f9 76%, #f3f5fd 92%, #fbfcff); box-shadow: inset 1px 1px #7f8fb5; }
.scene { position: absolute; inset: 0; width: 100%; height: 100%; }
.top, .bottom { position: relative; display: flex; justify-content: space-between; }
.top { padding: 9px 13px 0 9px; }
.legend { display: flex; flex-direction: column; color: #14204a; }
.legend strong { color: #060b22; }
.key { display: flex; align-items: center; gap: 3px; margin-top: 8px; }
.key i { width: 8px; height: 8px; background: #ff4632; border: 1px solid #7b3550; box-sizing: content-box; }
.brand { display: flex; flex-direction: column; align-items: flex-end; gap: 1px; color: #fff; font-family: "Open Sans", "Noto Sans", sans-serif; }
.brand b { font-size: 14px; line-height: 20px; }
.brand span { font-size: 8px; line-height: 11px; color: #e3eafc; }
.bottom { align-items: flex-end; justify-content: flex-end; }
.ruler { position: absolute; left: 50%; bottom: 3px; width: 180px; height: 30px; transform: translateX(-50%); }
.ruler text { text-anchor: middle; font-size: 6px; fill: #2d2f3a; }
.triad { width: 66px; height: 70px; margin-right: 10px; margin-bottom: 10px; }
.triad text { font-size: 8px; text-anchor: middle; }
</style>
